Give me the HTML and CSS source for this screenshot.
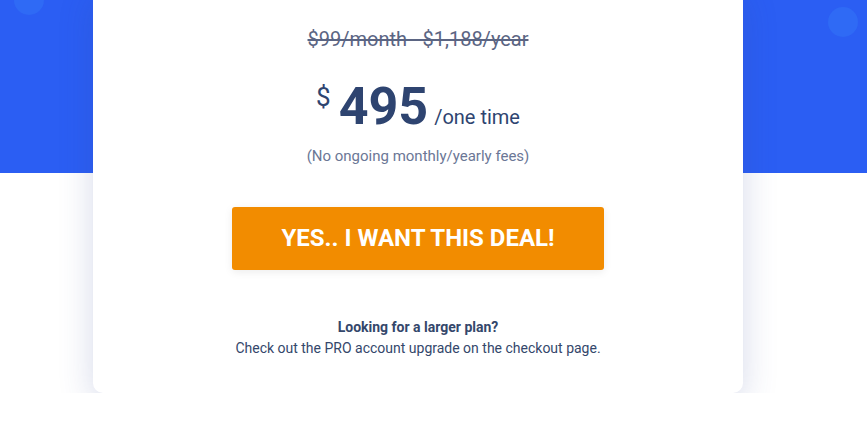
FILE: index.html
```html
<!DOCTYPE html>
<html lang="en">
<head>
    <meta charset="UTF-8">
    <meta name="viewport" content="width=device-width, initial-scale=1.0">
    <title>Lifetime Deal</title>
    <link rel="stylesheet" href="styles.css">
</head>
<body>
    <div class="hero">
        <span class="bubble bubble-left"></span>
        <span class="bubble bubble-right"></span>
    </div>

    <div class="card">
        <p class="old-price">$99/month - $1,188/year</p>
        <div class="price">
            <span class="currency">$</span>
            <span class="amount">495</span>
            <span class="period">/one time</span>
        </div>
        <p class="note">(No ongoing monthly/yearly fees)</p>

        <a href="#" class="deal-btn">YES.. I WANT THIS DEAL!</a>

        <div class="upgrade">
            <strong>Looking for a larger plan?</strong>
            <span>Check out the PRO account upgrade on the checkout page.</span>
        </div>
    </div>
</body>
</html>
```

FILE: styles.css
```css
body {
    margin: 0;
    font-family: Roboto, 'Liberation Sans', Arial, sans-serif;
    color: #34476b;
    background: #fff;
    overflow: hidden;
}
.hero {
    position: relative;
    height: 173px;
    background-color: #2b5ef3;
    overflow: hidden;
}
.bubble {
    position: absolute;
    width: 30px;
    height: 30px;
    border-radius: 50%;
    background-color: #2f6af5;
}
.bubble-left {
    left: 14px;
    top: -15px;
}
.bubble-right {
    left: 828px;
    top: 7px;
}
.card {
    position: relative;
    width: 650px;
    margin: -186px 0 0 93px;
    padding: 40px 0 34px;
    box-sizing: border-box;
    background: #fff;
    border-radius: 10px;
    box-shadow: 0 10px 35px rgba(50, 70, 150, 0.2);
    text-align: center;
}
.old-price {
    margin: 0;
    font-size: 20px;
    line-height: 24px;
    color: #5b6583;
    text-decoration: line-through;
}
.price {
    display: flex;
    justify-content: center;
    align-items: baseline;
    margin-top: 26px;
    color: #2e4470;
    line-height: 60px;
}
.currency {
    font-size: 26px;
    align-self: flex-start;
    line-height: 40px;
    margin-right: 8px;
}
.amount {
    font-size: 52px;
    font-weight: 700;
    margin-right: 6px;
}
.period {
    font-size: 20px;
}
.note {
    margin: -1px 0 0;
    font-size: 15px;
    line-height: 20px;
    color: #6b7796;
}
.deal-btn {
    display: block;
    width: 372px;
    margin: 41px auto 0;
    padding: 0;
    height: 63px;
    line-height: 63px;
    background-color: #f28c00;
    color: #fff;
    font-size: 24px;
    font-weight: 700;
    text-decoration: none;
    border-radius: 3px;
    box-shadow: 0 2px 8px rgba(0, 0, 0, 0.08);
}
.upgrade {
    display: flex;
    flex-direction: column;
    margin-top: 47px;
    font-size: 14px;
    line-height: 21px;
    color: #34476b;
}
```
